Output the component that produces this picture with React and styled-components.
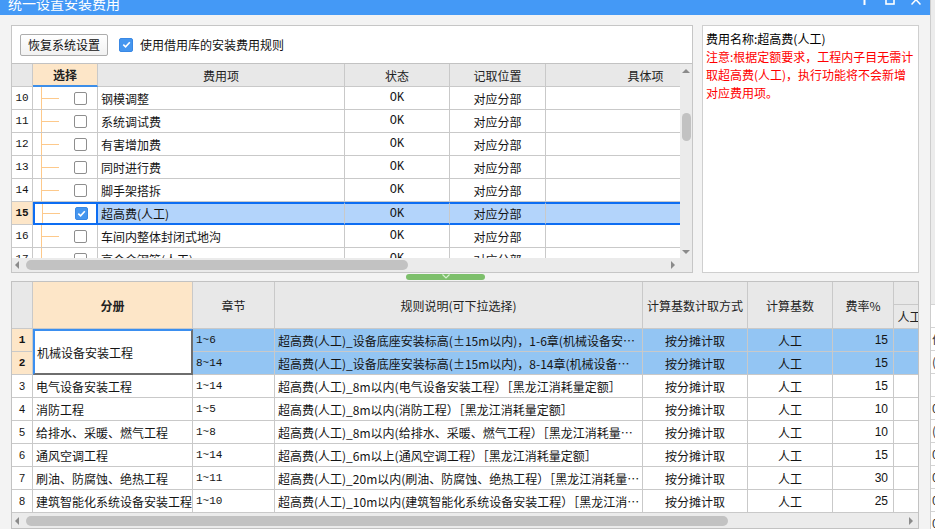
import React from "react";
import styled, { createGlobalStyle } from "styled-components";

const CJK = `"Noto Sans CJK SC", "Noto Sans", sans-serif`;
const MONO = `"Liberation Mono", "Noto Sans CJK SC", monospace`;
const SANS = `"Liberation Sans", "Noto Sans CJK SC", sans-serif`;

const LINE = "#c9c9c9";
const HEAD = "#e8e8e8";
const PEACH = "#fde6c8";

const GlobalStyle = createGlobalStyle`
  html, body { margin: 0; padding: 0; }
  body {
    background: #f3f3f3;
    font-family: ${CJK};
    font-size: 12px;
    color: #111;
  }
`;

const Screen = styled.div`
  display: flex;
  width: 935px;
  height: 529px;
  overflow: hidden;
`;

const Dialog = styled.div`
  width: 930px;
  flex-shrink: 0;
  display: flex;
  flex-direction: column;
  background: #f3f3f3;
`;

const TitleBar = styled.div`
  height: 15px;
  flex-shrink: 0;
  background: #4499f6;
  color: #fff;
  display: flex;
  align-items: flex-start;
  overflow: hidden;
  padding: 0 9px 0 8px;
`;

const Title = styled.div`
  font-size: 14px;
  line-height: 20px;
  margin-top: -7px;
  white-space: nowrap;
`;

const WinControls = styled.div`
  margin-left: auto;
  display: flex;
  align-items: flex-start;
`;

const Body = styled.div`
  flex: 1;
  min-height: 0;
  display: flex;
  flex-direction: column;
  padding: 10px 11px 0;
`;

const TopSection = styled.div`
  height: 248px;
  flex-shrink: 0;
  display: flex;
  gap: 9px;
`;

const LeftPanel = styled.div`
  width: 682px;
  box-sizing: border-box;
  background: #fff;
  border: 1px solid #c6c6c6;
  display: flex;
  flex-direction: column;
`;

const Toolbar = styled.div`
  height: 37px;
  flex-shrink: 0;
  display: flex;
  align-items: center;
  padding-left: 8px;
`;

const ToolButton = styled.button`
  height: 22px;
  padding: 0 7px;
  border: 1px solid #adadad;
  border-radius: 2px;
  background: linear-gradient(#ffffff, #f1f1f1);
  font-family: ${CJK};
  font-size: 12px;
  color: #111;
`;

const CheckLabel = styled.label`
  display: flex;
  align-items: center;
  gap: 7px;
  margin-left: 11px;
  font-size: 12px;
  color: #111;
`;

const Box = styled.span`
  width: ${(p) => p.$size}px;
  height: ${(p) => p.$size}px;
  box-sizing: border-box;
  flex-shrink: 0;
  align-self: center;
  border: 1px solid ${(p) => (p.$checked ? "#3a88e4" : "#8e8e8e")};
  border-radius: 2px;
  background: ${(p) => (p.$checked ? "#4596ef" : "#fff")};
  display: inline-flex;
  align-items: center;
  justify-content: center;
  margin-left: ${(p) => p.$offset || 0}px;
`;

function Check({ checked, size = 13, offset }) {
  return (
    <Box $checked={checked} $size={size} $offset={offset}>
      {checked && (
        <svg width="9" height="9" viewBox="0 0 9 9">
          <path d="M1.3 4.6 L3.6 6.8 L7.8 2.2" stroke="#fff" strokeWidth="1.6" fill="none" />
        </svg>
      )}
    </Box>
  );
}

const Grid = styled.div`
  flex: 1;
  min-height: 0;
  display: flex;
  flex-direction: column;
  border-top: 1px solid #c2c2c2;
`;

const GridMain = styled.div`
  flex: 1;
  min-height: 0;
  display: flex;
`;

const Viewport = styled.div`
  flex: 1;
  min-width: 0;
  overflow: hidden;
`;

const FeeTable = styled.div`
  display: grid;
  grid-template-columns: 21px 65px 247px 105px 96px 200px;
  grid-auto-rows: 23px;
`;

const Cell = styled.div`
  box-sizing: border-box;
  min-width: 0;
  border-right: 1px solid ${LINE};
  border-bottom: 1px solid ${LINE};
  background: ${(p) => p.$bg || "#fff"};
  display: flex;
  align-items: center;
  justify-content: ${(p) =>
    p.$align === "center" ? "center" : p.$align === "right" ? "flex-end" : "flex-start"};
  padding: 0 ${(p) => (p.$pad !== undefined ? p.$pad : 3)}px;
  overflow: hidden;
  white-space: nowrap;
  font-weight: ${(p) => (p.$bold ? 700 : 400)};
  font-family: ${(p) => p.$font || CJK};
  font-size: ${(p) => p.$size || 12}px;
  color: #141414;
  grid-row: ${(p) => (p.$span ? `span ${p.$span}` : "auto")};
  ${(p) =>
    p.$sel &&
    `border-top: 2px solid #0d6df2; border-bottom: 2px solid #0d6df2;`}
  ${(p) =>
    p.$focus &&
    `border-left: 2px solid #0d6df2; border-right: 2px solid #0d6df2;`}
`;

const HeadCell = styled(Cell)`
  background: ${(p) => p.$bg || HEAD};
  color: #222;
  justify-content: center;
  ${(p) => p.$underline && `border-bottom: 2px solid #3d8ee8;`}
`;

const TreeCell = styled(Cell)`
  align-items: stretch;
  padding: 0 0 0 ${(p) => (p.$focus ? 7 : 8)}px;
`;

const TreeLine = styled.span`
  width: 17px;
  flex-shrink: 0;
  border-left: 1px solid #fdc98b;
  background: linear-gradient(#fdc98b, #fdc98b) no-repeat left center / 100% 1px;
`;

const VScroll = styled.div`
  width: 12px;
  flex-shrink: 0;
  box-sizing: border-box;
  background: #ebebeb;
  display: flex;
  flex-direction: column;
  align-items: center;
  padding: 5px 0 4px;
`;

const ArrowUp = styled.span`
  width: 0;
  height: 0;
  border-left: 4px solid transparent;
  border-right: 4px solid transparent;
  border-bottom: 4px solid #8b8b8b;
`;

const ArrowDown = styled.span`
  width: 0;
  height: 0;
  border-left: 4px solid transparent;
  border-right: 4px solid transparent;
  border-top: 4px solid #8b8b8b;
`;

const ArrowLeft = styled.span`
  width: 0;
  height: 0;
  flex-shrink: 0;
  border-top: 4px solid transparent;
  border-bottom: 4px solid transparent;
  border-right: 4px solid #8b8b8b;
`;

const ArrowRight = styled.span`
  width: 0;
  height: 0;
  flex-shrink: 0;
  border-top: 4px solid transparent;
  border-bottom: 4px solid transparent;
  border-left: 4px solid #8b8b8b;
`;

const VThumb = styled.span`
  width: 9px;
  height: 28px;
  border-radius: 5px;
  background: #c2c2c2;
  margin-top: 40px;
`;

const Spacer = styled.span`
  flex: 1;
`;

const ScrollRow = styled.div`
  height: 14px;
  flex-shrink: 0;
  display: flex;
`;

const HScroll = styled.div`
  flex: 1;
  height: 14px;
  flex-shrink: 0;
  box-sizing: border-box;
  background: #ebebeb;
  display: flex;
  align-items: center;
  padding: 0 5px 0 3px;
`;

const HThumb = styled.span`
  height: 10px;
  width: ${(p) => p.$w}px;
  flex-shrink: 0;
  margin-left: 7px;
  border-radius: 5px;
  background: #c2c2c2;
`;

const Corner = styled.div`
  width: 12px;
  background: #ebebeb;
`;

const InfoPanel = styled.div`
  flex: 1;
  box-sizing: border-box;
  background: #fff;
  border: 1px solid #cfcfcf;
  padding: 4px 3px;
  line-height: 18px;
  font-size: 12px;
`;

const InfoLine = styled.div`
  white-space: nowrap;
  color: ${(p) => (p.$warn ? "#ff0000" : "#000")};
`;

const Splitter = styled.div`
  height: 8px;
  flex-shrink: 0;
  display: flex;
  align-items: flex-start;
`;

const Grip = styled.div`
  margin: 1px 0 0 395px;
  width: 79px;
  height: 6px;
  border-radius: 3px;
  background: #7dbf6b;
  display: flex;
  justify-content: center;
  align-items: flex-start;
`;

const Sheet = styled.div`
  flex: 1;
  min-height: 0;
  box-sizing: border-box;
  border: 1px solid #c2c2c2;
  background: #fff;
  display: flex;
  flex-direction: column;
  overflow: hidden;
`;

const SheetViewport = styled.div`
  height: 231px;
  flex-shrink: 0;
  overflow: hidden;
`;

const SheetTable = styled.div`
  display: grid;
  grid-template-columns: 21px 160px 82px 368px 105px 85px 61px 32px;
  grid-template-rows: 23px 24px;
  grid-auto-rows: 23px;
`;

const MergedCell = styled(Cell)`
  background: #fff;
  border-left: 2px solid #3b8ff0;
  border-top: 2px solid #3b8ff0;
  border-right: 2px solid #6e6e6e;
  border-bottom: 2px solid #6e6e6e;
  padding-left: 2px;
`;

const Behind = styled.div`
  width: 5px;
  flex-shrink: 0;
  box-sizing: border-box;
  display: flex;
  flex-direction: column;
  background: #ececec;
  border-left: 1px solid #cdcdcd;
  overflow: hidden;
`;

const BehindTop = styled.div`
  height: 304px;
  flex-shrink: 0;
  border-bottom: 1px solid #d4d4d4;
`;

const BehindRow = styled.div`
  height: 23px;
  flex-shrink: 0;
  box-sizing: border-box;
  background: #fff;
  border-bottom: 1px solid #d4d4d4;
  line-height: 22px;
  padding-left: 1px;
  white-space: nowrap;
  overflow: hidden;
  color: #333;
`;

const feeRows = [
  { n: 10, name: "钢模调整" },
  { n: 11, name: "系统调试费" },
  { n: 12, name: "有害增加费" },
  { n: 13, name: "同时进行费" },
  { n: 14, name: "脚手架搭拆" },
  { n: 15, name: "超高费(人工)", checked: true, sel: true },
  { n: 16, name: "车间内整体封闭式地沟" },
  { n: 17, name: "高合金钢管(人工)" },
];

const ruleRows = [
  { n: 1, ch: "1~6", rule: "超高费(人工)_设备底座安装标高(±15m以内)，1-6章(机械设备安…", rate: "15", sel: true },
  { n: 2, ch: "8~14", rule: "超高费(人工)_设备底座安装标高(±15m以内)，8-14章(机械设备…", rate: "15", sel: true },
  { n: 3, book: "电气设备安装工程", ch: "1~14", rule: "超高费(人工)_8m以内(电气设备安装工程）［黑龙江消耗量定额］", rate: "15" },
  { n: 4, book: "消防工程", ch: "1~5", rule: "超高费(人工)_8m以内(消防工程）［黑龙江消耗量定额］", rate: "10" },
  { n: 5, book: "给排水、采暖、燃气工程", ch: "1~8", rule: "超高费(人工)_8m以内(给排水、采暖、燃气工程）［黑龙江消耗量…", rate: "10" },
  { n: 6, book: "通风空调工程", ch: "1~14", rule: "超高费(人工)_6m以上(通风空调工程）［黑龙江消耗量定额］", rate: "15" },
  { n: 7, book: "刷油、防腐蚀、绝热工程", ch: "1~11", rule: "超高费(人工)_20m以内(刷油、防腐蚀、绝热工程）［黑龙江消耗量…", rate: "30" },
  { n: 8, book: "建筑智能化系统设备安装工程", ch: "1~10", rule: "超高费(人工)_10m以内(建筑智能化系统设备安装工程）［黑龙江消…", rate: "25" },
];

const behindText = ["", "价", "(", "", "0", "(", "0", "0", "0", "0"];

export default function App() {
  return (
    <>
      <GlobalStyle />
      <Screen>
        <Dialog>
          <TitleBar>
            <Title>统一设置安装费用</Title>
            <WinControls>
              <svg width="3" height="15" style={{ marginRight: 19 }}>
                <rect x="0.5" y="0" width="2" height="5" fill="#fff" />
              </svg>
              <svg width="10" height="15" style={{ marginRight: 16 }}>
                <rect x="1" y="-6" width="8" height="10" stroke="#fff" strokeWidth="1.6" fill="none" />
              </svg>
              <svg width="10" height="15">
                <path d="M0.5 -5 L9.5 4.5 M9.5 -5 L0.5 4.5" stroke="#fff" strokeWidth="1.5" />
              </svg>
            </WinControls>
          </TitleBar>

          <Body>
            <TopSection>
              <LeftPanel>
                <Toolbar>
                  <ToolButton>恢复系统设置</ToolButton>
                  <CheckLabel>
                    <Check checked size={14} />
                    使用借用库的安装费用规则
                  </CheckLabel>
                </Toolbar>

                <Grid>
                  <GridMain>
                    <Viewport>
                      <FeeTable>
                        <HeadCell />
                        <HeadCell $bg={PEACH} $bold $underline>选择</HeadCell>
                        <HeadCell>费用项</HeadCell>
                        <HeadCell>状态</HeadCell>
                        <HeadCell>记取位置</HeadCell>
                        <HeadCell>具体项</HeadCell>
                        {feeRows.map((r) => (
                          <React.Fragment key={r.n}>
                            <Cell
                              $align="center"
                              $pad={0}
                              $font={MONO}
                              $size={11}
                              $bold={r.sel}
                              $bg={r.sel ? PEACH : "#fff"}
                            >
                              {r.n}
                            </Cell>
                            <TreeCell $sel={r.sel} $focus={r.sel}>
                              <TreeLine />
                              <Check checked={r.checked} offset={15} />
                            </TreeCell>
                            <Cell $sel={r.sel} $bg={r.sel ? "#b3d4fb" : "#fff"}>{r.name}</Cell>
                            <Cell $sel={r.sel} $bg={r.sel ? "#b3d4fb" : "#fff"} $align="center" $font={MONO} $size={12}>
                              OK
                            </Cell>
                            <Cell $sel={r.sel} $bg={r.sel ? "#b3d4fb" : "#fff"} $align="center">
                              对应分部
                            </Cell>
                            <Cell $sel={r.sel} $bg={r.sel ? "#b3d4fb" : "#fff"} />
                          </React.Fragment>
                        ))}
                      </FeeTable>
                    </Viewport>
                    <VScroll>
                      <ArrowUp />
                      <VThumb />
                      <Spacer />
                      <ArrowDown />
                    </VScroll>
                  </GridMain>
                  <ScrollRow>
                    <HScroll>
                      <ArrowLeft />
                      <HThumb $w={382} />
                      <Spacer />
                      <ArrowRight />
                    </HScroll>
                    <Corner />
                  </ScrollRow>
                </Grid>
              </LeftPanel>

              <InfoPanel>
                <InfoLine>费用名称:超高费(人工)</InfoLine>
                <InfoLine $warn>注意:根据定额要求，工程内子目无需计</InfoLine>
                <InfoLine $warn>取超高费(人工)，执行功能将不会新增</InfoLine>
                <InfoLine $warn>对应费用项。</InfoLine>
              </InfoPanel>
            </TopSection>

            <Splitter>
              <Grip>
                <svg width="10" height="5">
                  <path d="M1.5 0.5 L5 4 L8.5 0.5" stroke="#d6f0cf" strokeWidth="1.2" fill="none" />
                </svg>
              </Grip>
            </Splitter>

            <Sheet>
              <SheetViewport>
                <SheetTable>
                  <HeadCell $span={2} />
                  <HeadCell $span={2} $bg={PEACH} $bold>分册</HeadCell>
                  <HeadCell $span={2}>章节</HeadCell>
                  <HeadCell $span={2}>规则说明(可下拉选择)</HeadCell>
                  <HeadCell $span={2}>计算基数计取方式</HeadCell>
                  <HeadCell $span={2}>计算基数</HeadCell>
                  <HeadCell $span={2}>费率%</HeadCell>
                  <HeadCell />
                  <HeadCell>人工</HeadCell>
                  {ruleRows.map((r) => {
                    const bg = r.sel ? "#93c5f3" : "#fff";
                    return (
                      <React.Fragment key={r.n}>
                        <Cell
                          $align="center"
                          $pad={0}
                          $bold={r.sel}
                          $font={r.sel ? MONO : SANS}
                          $size={11}
                          $bg={r.sel ? PEACH : "#fff"}
                        >
                          {r.n}
                        </Cell>
                        {r.n === 1 && <MergedCell $span={2}>机械设备安装工程</MergedCell>}
                        {r.book && <Cell>{r.book}</Cell>}
                        <Cell $bg={bg} $font={MONO} $size={11}>{r.ch}</Cell>
                        <Cell $bg={bg}>{r.rule}</Cell>
                        <Cell $bg={bg} $align="center">按分摊计取</Cell>
                        <Cell $bg={bg} $align="center">人工</Cell>
                        <Cell $bg={bg} $align="right" $pad={5} $font={SANS}>{r.rate}</Cell>
                        <Cell $bg={bg} />
                      </React.Fragment>
                    );
                  })}
                </SheetTable>
              </SheetViewport>
              <HScroll>
                <ArrowLeft />
                <HThumb $w={702} />
                <Spacer />
                <ArrowRight />
              </HScroll>
            </Sheet>
          </Body>
        </Dialog>

        <Behind>
          <BehindTop />
          {behindText.map((t, i) => (
            <BehindRow key={i}>{t}</BehindRow>
          ))}
        </Behind>
      </Screen>
    </>
  );
}
